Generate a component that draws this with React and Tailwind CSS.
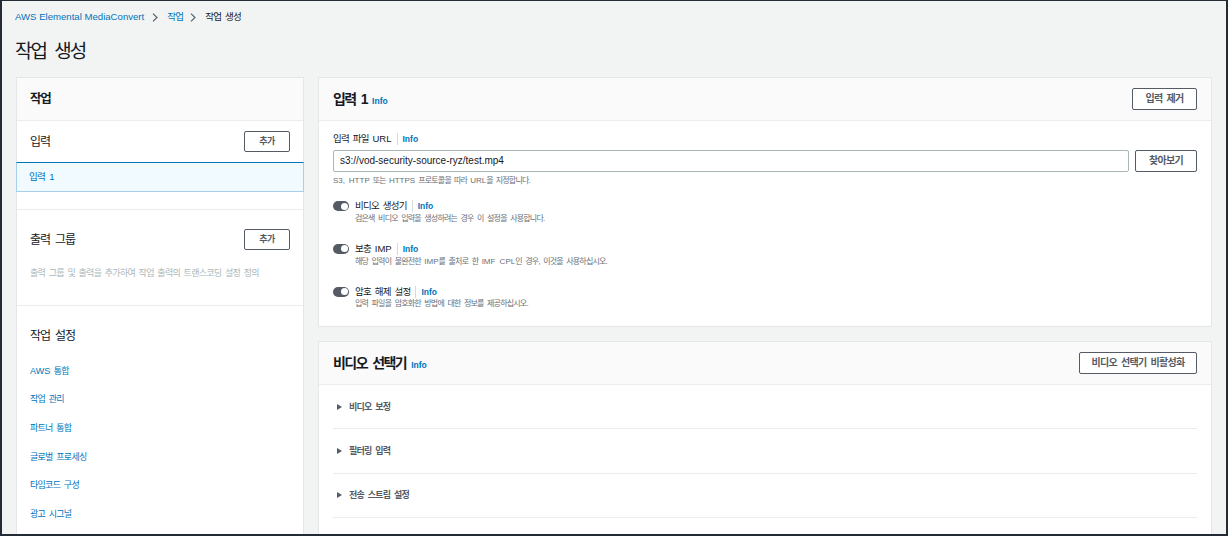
import React from 'react';

const Chevron = () => (
  <svg width="6" height="9" viewBox="0 0 6 9" className="shrink-0">
    <path d="M1 0.7 L5 4.5 L1 8.3" fill="none" stroke="#545b64" strokeWidth="1.1" />
  </svg>
);

// latin run inside korean text, keeps normal tracking
const L = ({ children }) => <span className="tracking-normal">{children}</span>;

const Info = ({ className = '' }) => (
  <span className={`text-[8.5px] leading-[10px] font-bold text-[#0073bb] tracking-normal [word-spacing:0] ${className}`}>Info</span>
);

const Btn = ({ children, className = '' }) => (
  <div
    className={`flex items-center justify-center border border-[#545b64] rounded-[2px] bg-white font-bold text-[#545b64] leading-none [word-spacing:0.2em] ${className}`}
  >
    {children}
  </div>
);

const Sep = () => <span className="w-px h-[12px] bg-[#d5dbdb] mx-[5px]" />;

const ToggleRow = ({ label, desc }) => (
  <div>
    <div className="flex items-center h-[12px]">
      <div className="relative w-[16px] h-[10px] rounded-full bg-[#545b64] mr-[6px] shrink-0">
        <div className="absolute right-[1.5px] top-[1.5px] w-[7px] h-[7px] rounded-full bg-white" />
      </div>
      <span className="text-[9.5px] leading-[12px] tracking-[-0.08em] [word-spacing:0.2em] text-[#16191f]">{label}</span>
      <Sep />
      <Info />
    </div>
    <div className="pl-[22px] mt-[1.6px] text-[8px] leading-[10px] tracking-[-0.1em] [word-spacing:0.25em] text-[#687078]">{desc}</div>
  </div>
);

const Expand = ({ label }) => (
  <div className="h-[44.3px] flex items-center border-b border-[#eaeded]">
    <svg width="5" height="6" viewBox="0 0 5 6" className="ml-[4px] mr-[7px]">
      <path d="M0 0 L5 3 L0 6 Z" fill="#545b64" />
    </svg>
    <span className="text-[9px] leading-[12px] font-bold tracking-[-0.08em] [word-spacing:0.2em] text-[#545b64]">{label}</span>
  </div>
);

const settings = [
  <><L>AWS</L> 통합</>,
  '작업 관리',
  '파트너 통합',
  '글로벌 프로세싱',
  '타임코드 구성',
  '광고 시그널',
];

export default function App() {
  return (
    <div className="w-[1228px] h-[536px] bg-[#232b35] pl-[2px] pr-[2px] pt-[1px] pb-[2px] font-['Liberation_Sans','Noto_Sans_CJK_KR',sans-serif]">
      <div className="h-full bg-[#f2f3f3] overflow-hidden px-[14px]">
        {/* breadcrumb */}
        <div className="h-[32px] flex items-center -ml-px">
          <span className="text-[9.6px] leading-none text-[#0073bb]">AWS Elemental MediaConvert</span>
          <span className="ml-[8px] mr-[9px] flex"><Chevron /></span>
          <span className="text-[9.5px] leading-none tracking-[-0.08em] text-[#0073bb]">작업</span>
          <span className="ml-[7px] mr-[9px] flex"><Chevron /></span>
          <span className="text-[9.5px] leading-none tracking-[-0.08em] [word-spacing:0.2em] text-[#16191f]">작업 생성</span>
        </div>
        {/* title */}
        <div className="h-[36px] flex items-center -ml-px">
          <h1 className="text-[19px] leading-none tracking-[-0.1em] [word-spacing:0.25em] text-[#16191f]">작업 생성</h1>
        </div>

        <div className="pt-[8px] grid grid-cols-[288px_1fr] gap-[14px] items-start">
          {/* left panel */}
          <div className="bg-white border border-[#e4e7e8] h-[470px]">
            <div className="h-[43px] bg-[#fafafa] border-b border-[#eaeded] flex items-center px-[13px]">
              <span className="text-[12.5px] leading-none font-bold tracking-[-0.1em] text-[#16191f]">작업</span>
            </div>
            <div className="border-b border-[#eaeded]">
              <div className="pt-[10px] px-[13px]">
                <div className="h-[21px] flex items-center justify-between">
                  <span className="text-[12px] leading-none tracking-[-0.08em] text-[#16191f]">입력</span>
                  <Btn className="w-[46px] h-[21px] text-[9px] tracking-[-0.05em]">추가</Btn>
                </div>
              </div>
              <div className="mt-[10px] h-[30px] bg-[#f1faff] border border-[#a6d0ea] border-t-[#0073bb] flex items-center px-[12px] -mx-px">
                <span className="text-[9.5px] leading-none tracking-[-0.08em] [word-spacing:0.25em] text-[#0073bb]">입력 1</span>
              </div>
              <div className="h-[17px]" />
            </div>
            <div className="border-b border-[#eaeded] px-[13px] pt-[19px] pb-[26px]">
              <div className="h-[21px] flex items-center justify-between">
                <span className="text-[12px] leading-none tracking-[-0.08em] [word-spacing:0.2em] text-[#16191f]">출력 그룹</span>
                <Btn className="w-[46px] h-[21px] text-[9px] tracking-[-0.05em]">추가</Btn>
              </div>
              <div className="mt-[17px] h-[12px] flex items-center text-[9px] leading-none tracking-[-0.08em] [word-spacing:0.2em] text-[#aab7b8]">
                출력 그룹 및 출력을 추가하여 작업 출력의 트랜스코딩 설정 정의
              </div>
            </div>
            <div className="px-[13px] pt-[22px]">
              <div className="h-[16px] flex items-center text-[12px] leading-none tracking-[-0.08em] [word-spacing:0.2em] text-[#16191f]">작업 설정</div>
              <div className="mt-[20px] flex flex-col gap-[14.7px]">
                {settings.map((s, i) => (
                  <div key={i} className="h-[14px] flex items-center text-[9px] leading-none tracking-[-0.08em] [word-spacing:0.2em] text-[#0073bb]">
                    <span>{s}</span>
                  </div>
                ))}
              </div>
            </div>
          </div>

          {/* right column */}
          <div className="flex flex-col gap-[14px]">
            <div className="bg-white border border-[#e4e7e8]">
              <div className="h-[43px] bg-[#fafafa] border-b border-[#eaeded] flex items-center justify-between px-[14px]">
                <div className="flex items-baseline">
                  <span className="text-[14px] leading-none font-bold tracking-[-0.11em] [word-spacing:0.2em] text-[#16191f]">입력 1</span>
                  <Info className="ml-[5px]" />
                </div>
                <Btn className="w-[65px] h-[22px] text-[10px] tracking-[-0.07em]">입력 제거</Btn>
              </div>
              <div className="px-[14px] pt-[12px] pb-[17px]">
                <div className="h-[12px] flex items-center">
                  <span className="text-[9.5px] leading-[12px] tracking-[-0.08em] [word-spacing:0.2em] text-[#16191f]">
                    입력 파일 <L>URL</L>
                  </span>
                  <Sep />
                  <Info />
                </div>
                <div className="mt-[4.7px] flex gap-[6px]">
                  <div className="flex-1 h-[22px] border border-[#aab7b8] rounded-[2px] flex items-center px-[6px] text-[10px] leading-none text-[#16191f]">
                    s3://vod-security-source-ryz/test.mp4
                  </div>
                  <Btn className="w-[62px] h-[22px] text-[10px] tracking-[-0.07em]">찾아보기</Btn>
                </div>
                <div className="mt-[4px] h-[10px] flex items-center text-[8px] leading-none tracking-[-0.1em] [word-spacing:0.2em] text-[#687078]">
                  <span>
                    <L>S3, HTTP</L> 또는 <L>HTTPS</L> 프로토콜을 따라 <L>URL</L>을 지정합니다.
                  </span>
                </div>
                <div className="mt-[14.7px] flex flex-col gap-[19px]">
                  <ToggleRow label="비디오 생성기" desc="검은색 비디오 입력을 생성하려는 경우 이 설정을 사용합니다." />
                  <ToggleRow
                    label={<>보충 <L>IMP</L></>}
                    desc={<>해당 입력이 불완전한 <L>IMP</L>를 출처로 한 <L>IMF CPL</L>인 경우, 이것을 사용하십시오.</>}
                  />
                  <ToggleRow label="암호 해제 설정" desc="입력 파일을 암호화한 방법에 대한 정보를 제공하십시오." />
                </div>
              </div>
            </div>

            <div className="bg-white border border-[#e4e7e8] h-[220px]">
              <div className="h-[43px] bg-[#fafafa] border-b border-[#eaeded] flex items-center justify-between px-[14px]">
                <div className="flex items-baseline">
                  <span className="text-[14px] leading-none font-bold tracking-[-0.11em] [word-spacing:0.2em] text-[#16191f]">비디오 선택기</span>
                  <Info className="ml-[5px]" />
                </div>
                <Btn className="w-[118px] h-[22px] text-[10px] tracking-[-0.07em]">비디오 선택기 비활성화</Btn>
              </div>
              <div className="px-[14px]">
                <Expand label="비디오 보정" />
                <Expand label="필터링 입력" />
                <Expand label="전송 스트림 설정" />
              </div>
            </div>
          </div>
        </div>
      </div>
    </div>
  );
}
